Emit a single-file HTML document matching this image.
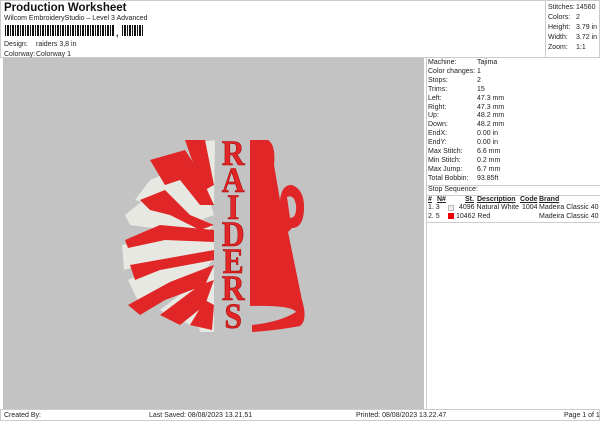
<!DOCTYPE html>
<html><head><meta charset="utf-8"><style>
*{margin:0;padding:0;box-sizing:border-box}
body{width:600px;height:424px;background:#fff;font-family:"Liberation Sans",sans-serif;font-size:7px;color:#222;position:relative;overflow:hidden}
.a{position:absolute;white-space:nowrap}
.t{font-size:11.5px;font-weight:bold;color:#111}
.bar{position:absolute;top:25px;height:11px;left:5px;width:110px;background:repeating-linear-gradient(90deg,#111 0 1px,#fff 1px 2px,#111 2px 3px,#111 3px 4px,#fff 4px 5px)}
.bar2{position:absolute;top:25px;height:11px;left:122px;width:22px;background:repeating-linear-gradient(90deg,#111 0 1px,#fff 1px 2px,#111 2px 4px,#fff 4px 5px)}
table{border-collapse:collapse}
td{padding:0;height:8.9px;line-height:8.9px;font-size:7px}
</style></head><body>
<div class="a" style="left:0;top:0;width:600px;height:58px;border:1px solid #ccc"></div>
<div class="a" style="left:545px;top:0;width:1px;height:58px;background:#ccc"></div>
<div class="a t" style="left:4px;top:2px">Production Worksheet</div>
<div class="a" style="left:4px;top:15px">Wilcom EmbroideryStudio – Level 3 Advanced</div>
<div class="bar"></div><div class="a" style="left:116px;top:28px;font-weight:bold;font-size:9px">,</div><div class="bar2"></div>
<div class="a" style="left:4px;top:41px">Design:</div><div class="a" style="left:36px;top:41px">raiders 3,8 in</div>
<div class="a" style="left:4px;top:51px">Colorway:</div><div class="a" style="left:36px;top:51px">Colorway 1</div>
<div class="a" style="left:548px;top:3px;line-height:10px">Stitches:<br>Colors:<br>Height:<br>Width:<br>Zoom:</div>
<div class="a" style="left:576px;top:3px;line-height:10px">14560<br>2<br>3.79 in<br>3.72 in<br>1:1</div>
<div class="a" style="left:3px;top:58px;width:421px;height:351px;background:#c3c3c3"></div>
<div class="a" style="left:426px;top:58px;width:1px;height:351px;background:#ccc"></div>
<div class="a" style="left:428px;top:59px">
<table>
<tr><td style="width:49px">Machine:</td><td>Tajima</td></tr>
<tr><td>Color changes:</td><td>1</td></tr>
<tr><td>Stops:</td><td>2</td></tr>
<tr><td>Trims:</td><td>15</td></tr>
<tr><td>Left:</td><td>47.3 mm</td></tr>
<tr><td>Right:</td><td>47.3 mm</td></tr>
<tr><td>Up:</td><td>48.2 mm</td></tr>
<tr><td>Down:</td><td>48.2 mm</td></tr>
<tr><td>EndX:</td><td>0.00 in</td></tr>
<tr><td>EndY:</td><td>0.00 in</td></tr>
<tr><td>Max Stitch:</td><td>6.6 mm</td></tr>
<tr><td>Min Stitch:</td><td>0.2 mm</td></tr>
<tr><td>Max Jump:</td><td>6.7 mm</td></tr>
<tr><td>Total Bobbin:</td><td>93.85ft</td></tr>
</table></div>
<div class="a" style="left:427px;top:185px;width:173px;height:1px;background:#ccc"></div>
<div class="a" style="left:428px;top:186px">Stop Sequence:</div>
<div class="a" style="left:427px;top:195px;width:173px;height:1px;background:#ccc"></div>
<div class="a" style="left:428px;top:196px;font-weight:bold;text-decoration:underline">#</div>
<div class="a" style="left:437px;top:196px;font-weight:bold;text-decoration:underline">N#</div>
<div class="a" style="left:465px;top:196px;font-weight:bold;text-decoration:underline">St.</div>
<div class="a" style="left:477px;top:196px;font-weight:bold;text-decoration:underline">Description</div>
<div class="a" style="left:520px;top:196px;font-weight:bold;text-decoration:underline">Code</div>
<div class="a" style="left:539px;top:196px;font-weight:bold;text-decoration:underline">Brand</div>
<div class="a" style="left:428px;top:204px">1. 3</div><div class="a" style="left:448px;top:205px;width:6px;height:6px;border:1px solid #bbb;background:#eee"></div>
<div class="a" style="left:459px;top:204px">4096 Natural White</div><div class="a" style="left:522px;top:204px">1004</div><div class="a" style="left:539px;top:204px">Madeira Classic 40</div>
<div class="a" style="left:428px;top:213px">2. 5</div><div class="a" style="left:448px;top:213px;width:6px;height:6px;background:#e00"></div>
<div class="a" style="left:456px;top:213px">10462 Red</div><div class="a" style="left:539px;top:213px">Madeira Classic 40</div>
<div class="a" style="left:427px;top:222px;width:173px;height:1px;background:#ccc"></div>
<div class="a" style="left:0;top:409px;width:600px;height:12px;border:1px solid #ccc"></div>
<div class="a" style="left:4px;top:412px">Created By:</div>
<div class="a" style="left:149px;top:412px">Last Saved: 08/08/2023 13.21.51</div>
<div class="a" style="left:356px;top:412px">Printed: 08/08/2023 13.22.47</div>
<div class="a" style="left:564px;top:412px">Page 1 of 1</div>
<svg class="a" style="left:0;top:0" width="600" height="424">
<g fill="#e8e8e2">
<path d="M215,140 L200,142 L195,170 L214,205 Z"/>
<path d="M196,160 L150,180 L135,200 L200,220 L214,215 Z"/>
<path d="M150,195 L125,215 L130,225 L205,235 L214,225 Z"/>
<path d="M122,245 L145,240 L214,238 L214,258 L150,262 L124,270 Z"/>
<path d="M128,280 L175,258 L214,258 L190,290 L140,305 Z"/>
<path d="M160,310 L214,268 L214,300 L190,325 Z"/>
<path d="M195,310 L214,285 L214,332 L200,332 Z"/>
</g>
<g fill="#e02626">
<path d="M150,160 L185,150 L198,170 L214,205 L200,205 L180,180 L165,185 Z"/>
<path d="M185,140 L205,140 L214,185 L205,190 L192,160 Z"/>
<path d="M140,200 L165,190 L190,215 L214,225 L200,230 L170,215 L150,210 Z"/>
<path d="M125,240 L160,225 L214,230 L214,242 L165,240 L128,248 Z"/>
<path d="M130,265 L214,250 L214,260 L160,270 L135,280 Z"/>
<path d="M128,305 L170,282 L214,265 L205,285 L165,300 L140,315 Z"/>
<path d="M160,315 L200,285 L214,280 L205,305 L180,325 Z"/>
<path d="M190,325 L205,300 L214,305 L212,330 Z"/>
<path d="M250,140 L268,140 Q276,145 274,165 L280,200 Q282,184 292,185 Q305,190 304,210 Q303,228 292,228 L288,232 L302,300 Q308,320 300,326 Q280,330 252,332 L252,325 Q280,322 296,312 Q292,305 250,306 Z"/>
</g>
<path d="M287,197 Q294,194 296,205 Q297,218 290,218 Z" fill="#c3c3c3"/>
<g transform="scale(0.88,1)">
<text fill="#e02626" stroke="#a00" stroke-width="0.6" font-family="Liberation Serif,serif" font-weight="bold" font-size="36" text-anchor="middle">
<tspan x="265" y="165">R</tspan><tspan x="265" y="192">A</tspan><tspan x="265" y="219">I</tspan><tspan x="265" y="246">D</tspan><tspan x="265" y="273">E</tspan><tspan x="265" y="300">R</tspan><tspan x="265" y="328">S</tspan>
</text></g>
</svg>
</body></html>
